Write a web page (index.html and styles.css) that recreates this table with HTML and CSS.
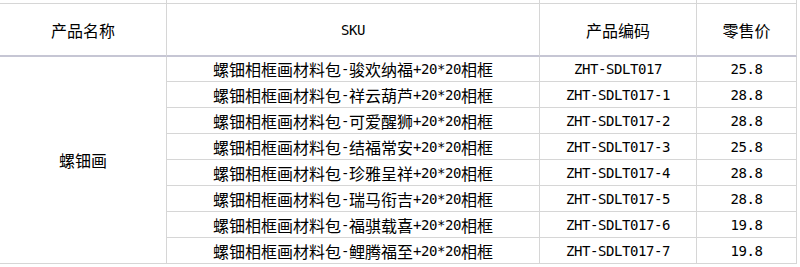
FILE: index.html
```html
<!DOCTYPE html>
<html lang="zh-CN">
<head>
<meta charset="utf-8">
<title>产品列表</title>
<link rel="stylesheet" href="styles.css">
</head>
<body>
<div class="sheet">
  <div class="cell strip"></div>
  <div class="cell strip"></div>
  <div class="cell strip"></div>
  <div class="cell strip"></div>

  <div class="cell head">产品名称</div>
  <div class="cell head"><span class="m">SKU</span></div>
  <div class="cell head">产品编码</div>
  <div class="cell head">零售价</div>

  <div class="cell name">螺钿画</div>

  <div class="cell">螺钿相框画材料包<span class="m">-</span>骏欢纳福<span class="m">+20*20</span>相框</div>
  <div class="cell m">ZHT-SDLT017</div>
  <div class="cell m">25.8</div>

  <div class="cell">螺钿相框画材料包<span class="m">-</span>祥云葫芦<span class="m">+20*20</span>相框</div>
  <div class="cell m">ZHT-SDLT017-1</div>
  <div class="cell m">28.8</div>

  <div class="cell">螺钿相框画材料包<span class="m">-</span>可爱醒狮<span class="m">+20*20</span>相框</div>
  <div class="cell m">ZHT-SDLT017-2</div>
  <div class="cell m">28.8</div>

  <div class="cell">螺钿相框画材料包<span class="m">-</span>结福常安<span class="m">+20*20</span>相框</div>
  <div class="cell m">ZHT-SDLT017-3</div>
  <div class="cell m">25.8</div>

  <div class="cell">螺钿相框画材料包<span class="m">-</span>珍雅呈祥<span class="m">+20*20</span>相框</div>
  <div class="cell m">ZHT-SDLT017-4</div>
  <div class="cell m">28.8</div>

  <div class="cell">螺钿相框画材料包<span class="m">-</span>瑞马衔吉<span class="m">+20*20</span>相框</div>
  <div class="cell m">ZHT-SDLT017-5</div>
  <div class="cell m">28.8</div>

  <div class="cell">螺钿相框画材料包<span class="m">-</span>福骐载喜<span class="m">+20*20</span>相框</div>
  <div class="cell m">ZHT-SDLT017-6</div>
  <div class="cell m">19.8</div>

  <div class="cell">螺钿相框画材料包<span class="m">-</span>鲤腾福至<span class="m">+20*20</span>相框</div>
  <div class="cell m">ZHT-SDLT017-7</div>
  <div class="cell m">19.8</div>
</div>
</body>
</html>
```

FILE: styles.css
```css
html, body {
  margin: 0;
  padding: 0;
  background: #ffffff;
}

.sheet {
  display: grid;
  width: 797px;
  grid-template-columns: 167px 373px 157px 100px;
  grid-template-rows: 4px 53px 25px repeat(7, 26px);
  font-family: "Noto Sans CJK SC", "Noto Sans", sans-serif;
  font-size: 16px;
  color: #000000;
}

.cell {
  box-sizing: border-box;
  border-right: 1px solid #d6d6d6;
  border-bottom: 1px solid #d6d6d6;
  display: flex;
  align-items: center;
  justify-content: center;
  white-space: nowrap;
  line-height: 1;
}

.head {
  border-bottom: 2px solid #c6c6d4;
}

.name {
  grid-row: 3 / span 8;
}

.m {
  font-family: "DejaVu Sans Mono", monospace;
  font-size: 14px;
  letter-spacing: -0.43px;
}

span.m {
  vertical-align: -1px;
}
```
